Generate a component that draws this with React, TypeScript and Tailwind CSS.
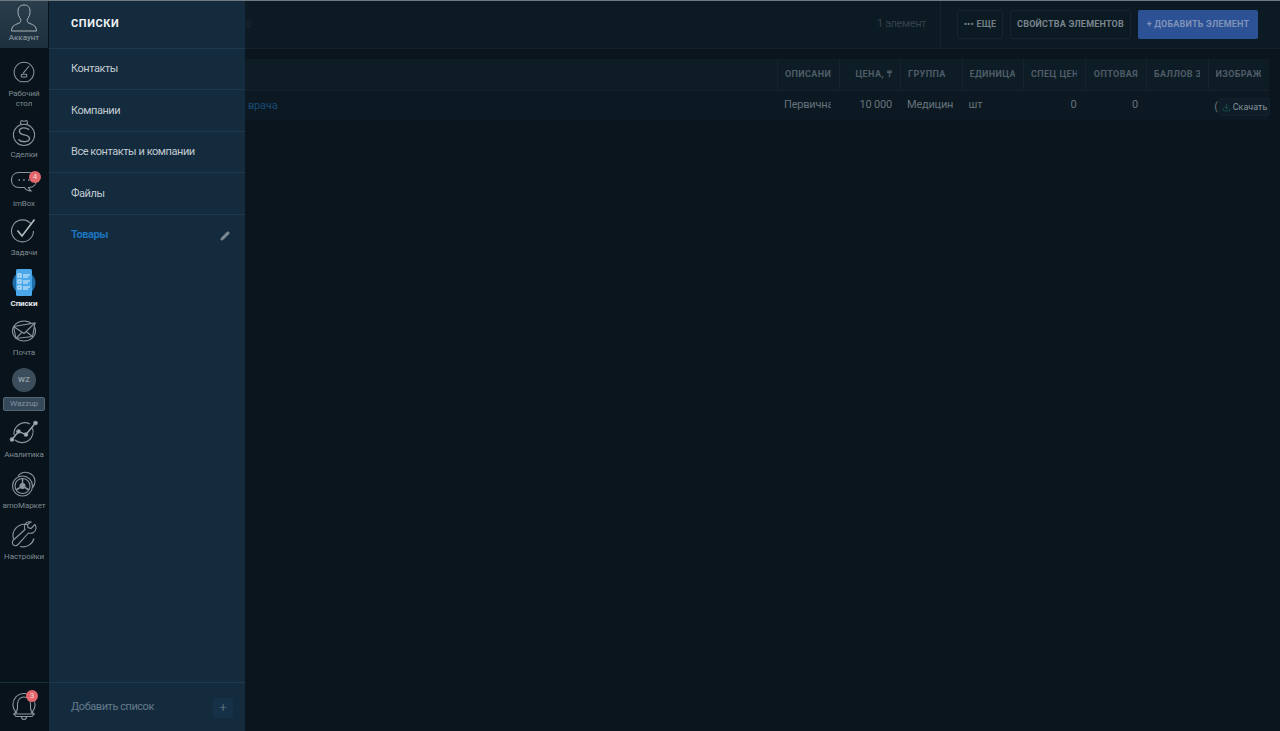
import type { ReactNode } from 'react';
import { Download, Pencil } from 'lucide-react';

const stroke = '#8b979e';

// Nav icons, drawn by hand to follow the thin outline style of the sidebar
function AccountIcon() {
  return (
    <svg width="30" height="28" viewBox="0 0 30 28" fill="none" stroke="#aab4ba" strokeWidth="1">
      <path d="M15 1c-4 0-6 2.500-6 6.500 0 3 1 5.500 2.500 7.500.5 1 .5 2.500-.5 3.500-2 1.500-7 2-8 5.500-.3 1-.5 2-.5 3h25c0-1-.2-2-.5-3-1-3.500-6-4-8-5.500-1-1-1-2.500-.5-3.500C20 13 21 10.500 21 7.500 21 3 19 1 15 1z" />
    </svg>
  );
}

function DashboardIcon() {
  return (
    <svg width="24" height="24" viewBox="0 0 26 26" fill="none" stroke={stroke} strokeWidth="1.100">
      <path d="M8 22.700A10.700 10.700 0 1 1 18 22.700" />
      <path d="M8 23.500h10" />
      <path d="M12 14.500L18.500 6.500" />
      <rect x="10" y="15.500" width="6" height="3" rx="1" />
    </svg>
  );
}

function DealsIcon() {
  return (
    <svg width="24" height="28" viewBox="0 0 26 30" fill="none" stroke={stroke} strokeWidth="1.100">
      <path d="M10 6c-1-1.500-1-3 0-4.500 2 1 4 1 6 0 1 1.500 1 3 0 4.500" />
      <circle cx="13" cy="17" r="11.500" />
      <path d="M18.500 11.500c-1.500-1.500-3.500-2-5.500-2-3 0-5 1.500-5 3.800 0 5 11 2.500 11 7.500 0 2.300-2.500 3.700-5.500 3.700-2.500 0-5-.8-6.500-2.500" strokeWidth="1.500" />
    </svg>
  );
}

function ImBoxIcon() {
  return (
    <svg width="28" height="24" viewBox="0 0 28 24" fill="none" stroke={stroke} strokeWidth="1.100">
      <path d="M9 2.500h10c4.500 0 7.500 3 7.500 7.500s-3 7.500-7.500 7.500h-.5c.5 1.500 1.500 2.500 2.500 3.500-2.500 0-5-1-6.500-3.500H9c-4.500 0-7.500-3-7.500-7.500S4.500 2.500 9 2.500z" />
      <path d="M8.500 10h1.500M13.200 10h1.500M18 10h1.500" strokeWidth="1.500" />
    </svg>
  );
}

function TasksIcon() {
  return (
    <svg width="28" height="26" viewBox="0 0 28 26" fill="none" stroke={stroke} strokeWidth="1.100">
      <path d="M21.500 6.500A11 11 0 1 0 23.500 13" />
      <path d="M7.500 12.500l4.500 5.500L24.500 1.500" stroke="#b4bdc2" strokeWidth="1.600" />
    </svg>
  );
}

function ListsIcon() {
  return (
    <svg width="24" height="29" viewBox="0 0 24 29">
      <circle cx="12" cy="15" r="11.500" fill="#1d6ea8" />
      <rect x="4" y="1" width="16" height="27" rx="1.500" fill="#4aa8ea" />
      <g fill="none" stroke="#dff1fc" strokeWidth="1">
        <rect x="6" y="6" width="3" height="3" />
        <rect x="6" y="12" width="3" height="3" />
        <rect x="6" y="18" width="3" height="3" />
        <path d="M11 7h7M11 9h5M11 13h7M11 15h5M11 19h7M11 21h5" />
      </g>
    </svg>
  );
}

function MailIcon() {
  return (
    <svg width="26" height="24" viewBox="0 0 26 24" fill="none" stroke={stroke} strokeWidth="1.100">
      <ellipse cx="13" cy="12" rx="11.500" ry="10" />
      <path d="M2.500 7.500L24 4 21.500 17.500 5 19.500z" fill="#0a151d" />
      <path d="M2.500 7.500L13 14.500 24 4M5 19.500l6-6.300M21.500 17.500l-6.500-5" />
    </svg>
  );
}

function AnalyticsIcon() {
  return (
    <svg width="30" height="26" viewBox="0 0 30 26" fill="none" stroke={stroke} strokeWidth="1.100">
      <path d="M23.500 8A11 11 0 0 1 6 20M5 15A11 11 0 0 1 21 4" />
      <path d="M3 19.500L9.500 11.500 17 14.500 26.500 3" stroke="#aab4ba" strokeWidth="1.300" />
      <circle cx="3" cy="19.500" r="1.800" fill="#aab4ba" />
      <circle cx="9.500" cy="11.500" r="1.800" fill="#aab4ba" />
      <circle cx="17" cy="14.500" r="1.800" fill="#aab4ba" />
      <circle cx="26.500" cy="3" r="1.800" fill="#aab4ba" />
    </svg>
  );
}

function MarketIcon() {
  return (
    <svg width="26" height="28" viewBox="0 0 26 28" fill="none" stroke={stroke} strokeWidth="1.100">
      <path d="M7 6A9.500 9.500 0 0 1 24 11c0 3-1 5-2.500 7" />
      <circle cx="11.500" cy="16" r="10" />
      <circle cx="11.500" cy="16" r="7.500" />
      <circle cx="11.500" cy="16" r="2.500" fill="#8b979e" />
      <path d="M11.500 13.500V9M9 17.500l-4 2.500M14 17.500l4 2.500" strokeWidth="1.500" />
    </svg>
  );
}

function SettingsIcon() {
  return (
    <svg width="28" height="28" viewBox="0 0 28 28" fill="none" stroke={stroke} strokeWidth="1.100">
      <path d="M17 3.500A11.500 11.500 0 0 0 3.500 18M10 25.500a11.500 11.500 0 0 0 14-8" />
      <path d="M25 3.500l-4 4-3-1 -.5-3 3.500-2.500c-3-.8-6 1-6.500 4-.2 1.300 0 2.500.5 3.500L3.500 19c-1.500 1.500-1.500 3.500-.2 4.800 1.300 1.300 3.300 1.200 4.700-.3L18.500 12c3.500 1 7-1 7.500-4.500.1-1.500-.2-3-1-4z" />
    </svg>
  );
}

function BellIcon() {
  return (
    <svg width="26" height="28" viewBox="0 0 26 28" fill="none" stroke={stroke} strokeWidth="1.100">
      <path d="M6 20A11 11 0 1 1 20 20" />
      <path d="M13 4c-4 0-6.500 3-6.500 7v4c0 2-1 4-3.500 6h20c-2.500-2-3.500-4-3.500-6v-4c0-4-2.500-7-6.500-7z" />
      <path d="M3 21l2 2.500h16l2-2.500M10.500 23.500c0 2 1 3 2.500 3s2.500-1 2.500-3" />
    </svg>
  );
}

function Badge({ value, className }: { value: string; className: string }) {
  return (
    <span className={`absolute flex h-[12px] w-[12px] items-center justify-center rounded-full bg-[#e2666c] text-[8px] leading-none text-[#f7d3d3] ${className}`}>
      {value}
    </span>
  );
}

function NavItem({ icon, label, className = '', active = false }: {
  icon: ReactNode;
  label: string;
  className?: string;
  active?: boolean;
}) {
  return (
    <div className={`flex flex-col items-center ${className}`}>
      <div className="relative flex h-[30px] w-full items-center justify-center">{icon}</div>
      <div className={`mt-[2px] whitespace-pre-line text-center text-[8px] leading-[10px] tracking-[-0.1px] ${active ? 'font-bold text-[#e4e9ec]' : 'text-[#7f8b92]'}`}>
        {label}
      </div>
    </div>
  );
}

function Sidebar() {
  return (
    <nav className="flex h-full w-[49px] shrink-0 flex-col bg-[#08131b] pr-[1px]">
      <div className="flex h-[47px] shrink-0 flex-col items-center bg-gradient-to-b from-[#2a3d4b] to-[#1d303e] pt-[3px]">
        <AccountIcon />
        <div className="mt-[1px] text-[8px] leading-[10px] text-[#98a4ab]">Аккаунт</div>
      </div>
      <NavItem className="mt-[9px]" icon={<DashboardIcon />} label={'Рабочий\nстол'} />
      <NavItem className="mt-[9px]" icon={<DealsIcon />} label="Сделки" />
      <NavItem
        className="mt-[7px]"
        icon={
          <>
            <ImBoxIcon />
            <Badge value="4" className="right-[7px] top-[4px]" />
          </>
        }
        label="imBox"
      />
      <NavItem className="mt-[7px]" icon={<TasksIcon />} label="Задачи" />
      <NavItem className="mt-[9px]" icon={<ListsIcon />} label="Списки" active />
      <NavItem className="mt-[7px]" icon={<MailIcon />} label="Почта" />
      <div className="mt-[7px] flex flex-col items-center">
        <div className="flex h-[30px] items-center justify-center">
          <div className="flex h-[24px] w-[24px] items-center justify-center rounded-full bg-[#3c4e5b] text-[8px] font-bold text-[#8a99a3]">
            WZ
          </div>
        </div>
        <div className="mt-[2px] flex h-[14px] w-[42px] items-center justify-center rounded-[2px] border border-[#54666f] bg-[#35495a] text-[8px] leading-none text-[#8394a0]">
          Wazzup
        </div>
      </div>
      <NavItem className="mt-[7px]" icon={<AnalyticsIcon />} label="Аналитика" />
      <NavItem className="mt-[9px]" icon={<MarketIcon />} label="amoМаркет" />
      <NavItem className="mt-[9px]" icon={<SettingsIcon />} label="Настройки" />
      <div className="mt-auto flex h-[49px] items-center justify-center border-t border-[#17303f]">
        <div className="relative flex h-[30px] w-full items-center justify-center">
          <BellIcon />
          <Badge value="3" className="right-[10px] top-[-2px]" />
        </div>
      </div>
    </nav>
  );
}

const menuItems = [
  { label: 'Контакты', height: 'h-[41px]' },
  { label: 'Компании', height: 'h-[42px]' },
  { label: 'Все контакты и компании', height: 'h-[41px]' },
  { label: 'Файлы', height: 'h-[42px]' },
];

function ListsMenu() {
  return (
    <aside className="flex h-full w-[196px] shrink-0 flex-col bg-[#142b3e]">
      <div className="flex h-[48px] shrink-0 items-center border-b border-[#1d3a50] pl-[22px] text-[11px] font-bold uppercase tracking-[0.6px] text-[#eef2f4]">
        Списки
      </div>
      {menuItems.map((item) => (
        <div key={item.label} className={`flex shrink-0 items-center border-b border-[#1d3a50] pl-[22px] pt-[1px] text-[11px] tracking-[-0.45px] text-[#c0cad0] ${item.height}`}>
          {item.label}
        </div>
      ))}
      <div className="flex h-[41px] shrink-0 items-center justify-between pl-[22px] pr-[15px] text-[11px] font-bold tracking-[-0.45px] text-[#1c74bd]">
        Товары
        <Pencil size={10} className="fill-[#7d8b95] text-[#7d8b95]" />
      </div>
      <div className="mt-auto flex h-[49px] shrink-0 items-center justify-between border-t border-[#1d3a50] pl-[22px] pr-[12px] pt-[1px] text-[11px] tracking-[-0.45px] text-[#64798a]">
        Добавить список
        <div className="flex h-[20px] w-[20px] items-center justify-center rounded-[2px] bg-[#163047] text-[13px] font-light leading-none text-[#6f8392]">
          +
        </div>
      </div>
    </aside>
  );
}

const columns = [
  { title: 'ОПИСАНИ', value: 'Первична' },
  { title: 'ЦЕНА, ₸', value: '10 000', right: true },
  { title: 'ГРУППА', value: 'Медицин' },
  { title: 'ЕДИНИЦА', value: 'шт' },
  { title: 'СПЕЦ ЦЕН', value: '0', right: true },
  { title: 'ОПТОВАЯ', value: '0', right: true },
  { title: 'БАЛЛОВ З', value: '' },
  { title: 'ИЗОБРАЖ', value: '' },
];

function ProductsTable() {
  return (
    <div className="relative mr-[11px] mt-[10px]">
      <div className="flex h-[32px] border-b border-[#13222d] bg-[#0e1c26]">
        <div className="flex-1" />
        {columns.map((col) => (
          <div key={col.title} className="flex w-[61.500px] items-center border-l border-[#14232e] pl-[7px] pr-[8px] pt-[1px] text-[9px] font-bold tracking-[0.4px] text-[#4e5d66]">
            <div className={`w-full overflow-hidden whitespace-nowrap ${col.right ? 'text-right' : ''}`}>{col.title}</div>
          </div>
        ))}
      </div>
      <div className="flex h-[29px] bg-[#0c1922] text-[11px] tracking-[-0.2px] text-[#65737b]">
        <div className="flex-1 pl-[3px] leading-[29px] text-[#1a4a75]">врача</div>
        {columns.map((col) => (
          <div key={col.title} className="flex w-[61.500px] items-center pl-[7px] pr-[8px]">
            <div className={`w-full overflow-hidden whitespace-nowrap ${col.right ? 'text-right' : ''}`}>{col.value}</div>
          </div>
        ))}
      </div>
      {/* download button hanging over the last column, with the cell's bracket peeking out */}
      <div className="absolute right-[-1px] top-[39px] flex h-[18px] items-center">
        <span className="mr-[1px] text-[11px] text-[#65737b]">(</span>
        <div className="flex h-[18px] w-[51px] items-center justify-center gap-[2px] rounded-[2px] border border-[#12212c] bg-[#0e1d27] pt-[1px] text-[9px] text-[#85919a]">
          <Download size={9} className="text-[#1d5a4e]" />
          Скачать
        </div>
      </div>
    </div>
  );
}

function Content() {
  return (
    <main className="flex h-full min-w-0 flex-1 flex-col bg-[#0a151d]">
      <header className="flex h-[48px] shrink-0 items-center justify-between border-b border-[#13222d] bg-[#0c1a23]">
        <span className="text-[11px] text-[#1f2d37]">о</span>
        <div className="flex h-full items-center">
          <span className="mr-[14px] text-[11px] tracking-[-0.4px] text-[#33424c]">1 элемент</span>
          <div className="flex h-full items-center gap-[7px] border-l border-[#13222d] pl-[16px] pr-[22px] text-[9px] font-bold tracking-[0.2px]">
            <div className="flex h-[29px] w-[46px] items-center justify-center whitespace-nowrap rounded-[2px] border border-[#15242f] text-[#707d85]">
              ••• ЕЩЕ
            </div>
            <div className="flex h-[29px] w-[121px] items-center justify-center whitespace-nowrap rounded-[2px] border border-[#15242f] text-[#7a868d]">
              СВОЙСТВА ЭЛЕМЕНТОВ
            </div>
            <div className="flex h-[29px] w-[120px] items-center justify-center whitespace-nowrap rounded-[2px] bg-[#2c5195] text-[#7f93b8]">
              + ДОБАВИТЬ ЭЛЕМЕНТ
            </div>
          </div>
        </div>
      </header>
      <ProductsTable />
    </main>
  );
}

export default function App() {
  return (
    <div className="flex h-[731px] w-full overflow-hidden border-t border-[#6d7a82] font-['Roboto','Liberation_Sans',sans-serif]">
      <Sidebar />
      <ListsMenu />
      <Content />
    </div>
  );
}
